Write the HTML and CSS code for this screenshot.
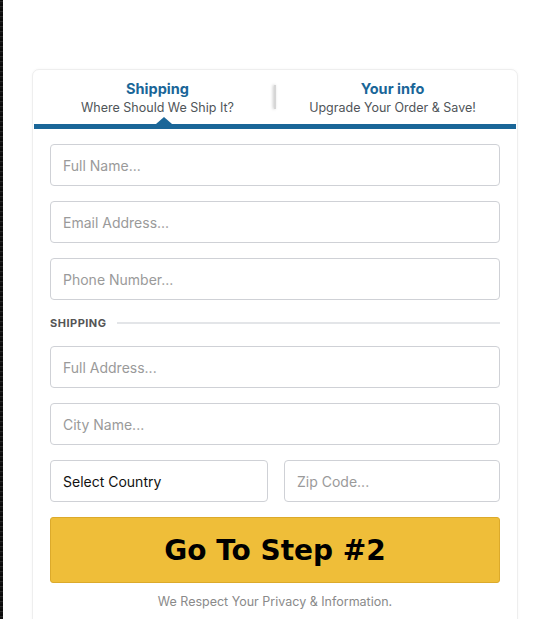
FILE: index.html
```html
<!DOCTYPE html>
<html lang="en">
<head>
<meta charset="utf-8">
<title>Checkout - Shipping</title>
<link rel="stylesheet" href="styles.css">
</head>
<body>
<div class="page">
  <div class="edge"></div>
  <main class="main">
    <section class="card">
      <div class="tabs">
        <div class="tab tab-active">
          <div class="tab-title">Shipping</div>
          <div class="tab-sub">Where Should We Ship It?</div>
          <span class="tab-arrow"></span>
        </div>
        <div class="tab-divider"></div>
        <div class="tab">
          <div class="tab-title">Your info</div>
          <div class="tab-sub">Upgrade Your Order &amp; Save!</div>
        </div>
      </div>
      <div class="bar"></div>
      <form class="form">
        <input class="field" type="text" placeholder="Full Name...">
        <input class="field" type="text" placeholder="Email Address...">
        <input class="field" type="text" placeholder="Phone Number...">
        <div class="section-label"><span>SHIPPING</span><i class="section-line"></i></div>
        <input class="field" type="text" placeholder="Full Address...">
        <input class="field" type="text" placeholder="City Name...">
        <div class="row">
          <div class="field select">Select Country</div>
          <input class="field" type="text" placeholder="Zip Code...">
        </div>
        <button class="cta" type="button">Go To Step #2</button>
        <p class="privacy">We Respect Your Privacy &amp; Information.</p>
      </form>
    </section>
  </main>
</div>
</body>
</html>
```
FILE: styles.css
```css
* { box-sizing: border-box; }
html, body { margin: 0; padding: 0; background: #fff; }
body { font-family: "Inter", "Open Sans", sans-serif; color: #222; overflow: hidden; }

.page { display: flex; min-height: 619px; }
.edge {
  width: 3px; flex: none;
  background: repeating-linear-gradient(0deg, #111 0 2px, #2a2a2a 2px 3px, #0a0a0a 3px 5px);
}
.main { flex: 1; padding: 69px 0 0 29px; }

.card {
  width: 486px;
  min-height: 600px;
  border: 1px solid #eeeeee;
  border-radius: 7px;
  padding: 0 1px;
  box-shadow: 0 0 3px rgba(0,0,0,0.04);
  background: #fff;
}

.tabs { display: flex; align-items: stretch; height: 54px; padding: 0 7px; }
.tab { position: relative; flex: 1; text-align: center; padding-top: 9px; }
.tab-title { color: #1a6698; font-weight: 700; font-size: 14.5px; line-height: 19px; }
.tab-sub { color: #505559; font-size: 12.5px; line-height: 19px; }
.tab-divider {
  width: 2px; margin-top: 15px; height: 24px; background: #d6d6d6;
  box-shadow: -1px 0 3px rgba(0,0,0,0.25);
}
.tab-arrow {
  position: absolute; left: 50%; bottom: 0; margin-left: -2px;
  width: 0; height: 0;
  border-left: 8px solid transparent; border-right: 8px solid transparent;
  border-bottom: 7px solid #1a6698;
}
.bar { height: 5px; background: #1a6698; }

.form { display: flex; flex-direction: column; gap: 15px; padding: 15px 16px 0; }
.field {
  display: block; width: 100%; height: 42px;
  border: 1px solid #cfd1d6; border-radius: 4px;
  padding: 0 12px; font: inherit; font-size: 14px; color: #111; background: #fff;
  outline: none;
}
.field::placeholder { color: #9a9a9a; }
.select { display: flex; align-items: center; color: #111; }

.section-label { display: flex; align-items: center; gap: 10px; height: 16px; }
.section-label span { font-size: 11px; font-weight: 700; color: #555; letter-spacing: 0.5px; }
.section-line { flex: 1; height: 2px; background: #e3e5e8; }

.row { display: grid; grid-template-columns: 218px 1fr; gap: 16px; }

.cta {
  height: 66px; margin-top: 0; width: 100%;
  background: #efbe39; border: 1px solid #dcaa2b; border-radius: 3px;
  font-family: "DejaVu Sans", "Inter", sans-serif; font-size: 28px; font-weight: 700; color: #000; letter-spacing: 0;
}
.privacy { margin: -4px 0 0; text-align: center; font-size: 12.5px; color: #8a8a8a; }
```
